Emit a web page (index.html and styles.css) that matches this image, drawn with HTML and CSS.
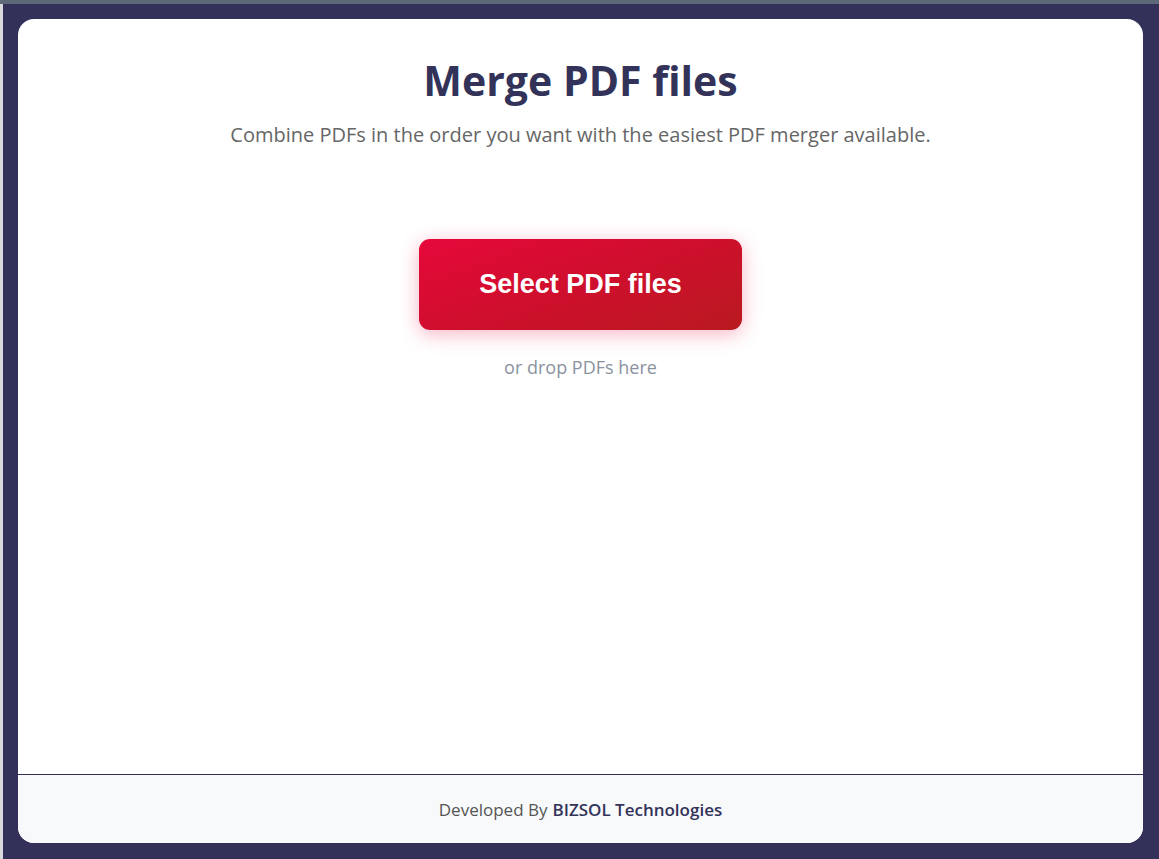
FILE: index.html
```html
<!DOCTYPE html>
<html>
<head>
<meta charset="utf-8">
<link rel="stylesheet" href="styles.css">
</head>
<body>
<div class="chrome-top"></div>
<div class="frame">
  <div class="chrome-left"></div>
  <div class="stage">
    <div class="card">
      <main class="content">
        <h1 class="title">Merge PDF files</h1>
        <p class="subtitle">Combine PDFs in the order you want with the easiest PDF merger available.</p>
        <button class="select-btn">Select PDF files</button>
        <p class="drop-hint">or drop PDFs here</p>
      </main>
      <footer class="footer">Developed By <strong>BIZSOL Technologies</strong></footer>
    </div>
  </div>
</div>
</body>
</html>
```
FILE: styles.css
```css
* { box-sizing: border-box; }
html, body { margin: 0; padding: 0; height: 100%; }
body {
  background: #33305a;
  font-family: "Open Sans", "Noto Sans", sans-serif;
  display: flex;
  flex-direction: column;
  overflow: hidden;
}
.chrome-top { height: 4px; background: #5d6878; flex: none; }
.frame { flex: 1; display: flex; min-height: 0; }
.chrome-left { width: 3px; background: #d9d9dc; flex: none; }
.stage {
  flex: 1;
  padding: 15px 16px 16px 15px;
  display: flex;
}
.card {
  flex: 1;
  background: #ffffff;
  border-radius: 16px;
  overflow: hidden;
  display: flex;
  flex-direction: column;
}
.content {
  flex: 1;
  display: flex;
  flex-direction: column;
  align-items: center;
  padding-top: 35px;
}
.title {
  margin: 0;
  font-size: 41px;
  font-weight: 700;
  color: #33335a;
  line-height: 52px;
  letter-spacing: 0;
}
.subtitle {
  margin: 16px 0 0;
  font-size: 20px;
  color: #666666;
  line-height: 26px;
}
.select-btn {
  margin-top: 91px;
  width: 323px;
  height: 91px;
  border: none;
  border-radius: 11px;
  background: linear-gradient(160deg, #e5083a 0%, #cf0f2d 50%, #b91a20 100%);
  color: #ffffff;
  font-family: "Liberation Sans", Arial, sans-serif;
  font-weight: 700;
  font-size: 27px;
  box-shadow: 0 4px 20px rgba(229, 8, 58, 0.3);
  cursor: pointer;
}
.drop-hint {
  margin: 24px 0 0;
  font-size: 18px;
  color: #8a92a0;
  line-height: 26px;
}
.footer {
  flex: none;
  height: 69px;
  border-top: 1px solid #33305a;
  background: #f8f9fb;
  display: flex;
  align-items: center;
  justify-content: center;
  gap: 5px;
  font-size: 17px;
  color: #555555;
}
.footer strong { color: #33335a; font-weight: 600; }
```
